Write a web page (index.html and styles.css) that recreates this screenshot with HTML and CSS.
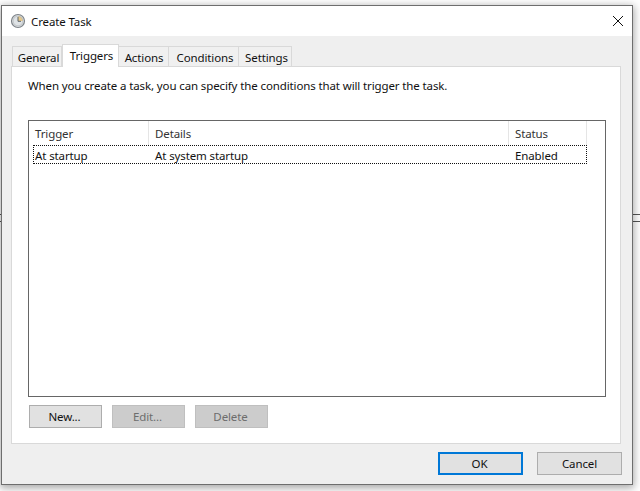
FILE: index.html
```html
<!DOCTYPE html>
<html lang="en">
<head>
<meta charset="utf-8">
<title>Create Task</title>
<link rel="stylesheet" href="styles.css">
</head>
<body>
<div class="desktop">
  <div class="bg-line bg-line-a"></div>
  <div class="bg-line bg-line-b"></div>
  <div class="window">
    <header class="titlebar">
      <svg class="clock" width="16" height="16" viewBox="0 0 16 16" aria-hidden="true">
        <circle cx="8" cy="8" r="6.5" fill="#dfe3e6" stroke="#7d8388" stroke-width="1.2"/>
        <path d="M8 3 A5 5 0 0 1 13 8 L8 8 Z" fill="#e6c98c"/>
        <circle cx="8" cy="8" r="4.9" fill="none" stroke="#a9aeb2" stroke-width=".6"/>
        <path d="M8 4v4.3h3" fill="none" stroke="#5f666b" stroke-width="1"/>
      </svg>
      <span class="title">Create Task</span>
      <svg class="close" width="10" height="10" viewBox="0 0 10 10" aria-hidden="true">
        <path d="M0 0L10 10M10 0L0 10" stroke="#111" stroke-width="1" fill="none"/>
      </svg>
    </header>
    <div class="content">
      <nav class="tabs">
        <span class="tab tab-general">General</span>
        <span class="tab tab-active">Triggers</span>
        <span class="tab tab-actions">Actions</span>
        <span class="tab tab-conditions">Conditions</span>
        <span class="tab tab-settings">Settings</span>
      </nav>
      <section class="panel">
        <p class="intro">When you create a task, you can specify the conditions that will trigger the task.</p>
        <div class="list">
          <div class="list-head">
            <span class="col col-trigger">Trigger</span>
            <span class="col col-details">Details</span>
            <span class="col col-status">Status</span>
          </div>
          <div class="list-row">
            <span class="cell cell-trigger">At startup</span>
            <span class="cell cell-details">At system startup</span>
            <span class="cell cell-status">Enabled</span>
          </div>
        </div>
        <div class="list-actions">
          <button class="btn btn-list">New...</button>
          <button class="btn btn-list btn-disabled">Edit...</button>
          <button class="btn btn-list btn-disabled">Delete</button>
        </div>
      </section>
      <footer class="dialog-actions">
        <button class="btn btn-dialog btn-default">OK</button>
        <button class="btn btn-dialog">Cancel</button>
      </footer>
    </div>
  </div>
</div>
</body>
</html>
```
FILE: styles.css
```css
* { box-sizing: border-box; }
html, body { margin: 0; height: 100%; }
body {
  background: #fff;
  font-family: "Noto Sans", "Open Sans", sans-serif;
  font-size: 11.5px;
  letter-spacing: -.12px;
  color: #111;
  overflow: hidden;
}
.desktop {
  position: relative;
  width: 640px;
  height: 491px;
  overflow: hidden;
}
.bg-line {
  position: absolute;
  left: 0;
  width: 640px;
  height: 1px;
  background: #555;
}
.bg-line-a { top: 214px; }
.bg-line-b { top: 221px; }
.window {
  position: absolute;
  left: 1px;
  top: 5px;
  width: 632px;
  height: 480px;
  border: 1px solid #6e6e6e;
  background: #efefef;
  display: flex;
  flex-direction: column;
  box-shadow: 0 2px 8px 1px rgba(0, 0, 0, .35);
}
.titlebar {
  height: 30px;
  flex: none;
  background: #fff;
  display: flex;
  align-items: center;
  padding: 0 9px 0 8px;
  gap: 5px;
}
.title { flex: 1; color: #111; }
.content {
  flex: 1;
  padding: 9px 10px 9px 9px;
  display: flex;
  flex-direction: column;
}
.tabs {
  display: flex;
  align-items: flex-end;
  height: 22px;
  padding-left: 1px;
  position: relative;
  z-index: 1;
  margin-bottom: -1px;
}
.tab {
  height: 20px;
  margin-bottom: 1px;
  padding: 2px 0 0 3px;
  background: #f0f0f0;
  border: 1px solid #d9d9d9;
  border-bottom: 0;
  border-left: 0;
  display: flex;
  align-items: center;
  justify-content: center;
  color: #111;
}
.tab-general { width: 50px; border-left: 1px solid #d9d9d9; }
.tab-active {
  width: 57px;
  height: 23px;
  margin-bottom: 0;
  padding: 0 0 2px 2px;
  background: #fff;
  border: 1px solid #d9d9d9;
  border-bottom: 0;
}
.tab-actions { width: 50px; padding-left: 1px; }
.tab-conditions { width: 70px; }
.tab-settings { width: 53px; }
.panel {
  flex: none;
  height: 378px;
  width: 610px;
  background: #fff;
  border: 1px solid #d9d9d9;
  padding: 10px 15px 14px 16px;
  display: flex;
  flex-direction: column;
}
.intro {
  margin: 0;
  height: 17px;
  line-height: 17px;
  white-space: nowrap;
  color: #111;
}
.list {
  margin-top: 26px;
  width: 578px;
  height: 277px;
  border: 1px solid #666;
  background: #fff;
}
.list-head, .list-row {
  display: grid;
  grid-template-columns: 120px 360px 78px;
  width: 558px;
}
.list-head { height: 24px; }
.col {
  display: flex;
  align-items: center;
  padding-left: 6px;
  border-right: 1px solid #e5e5e5;
  color: #333;
}
.list-row {
  height: 19px;
  margin-left: 4px;
  width: 554px;
  grid-template-columns: 116px 360px 78px;
  border: 1px dotted #111;
  align-items: center;
  padding-top: 2px;
}
.cell { padding-left: 1px; color: #111; }
.cell-details, .cell-status { padding-left: 5px; }
.list-actions {
  display: flex;
  gap: 10px;
  margin-top: 8px;
  padding-left: 1px;
}
.btn {
  width: 73px;
  height: 23px;
  padding: 0;
  font: inherit;
  letter-spacing: inherit;
  color: #111;
  background: #e1e1e1;
  border: 1px solid #adadad;
}
.btn-list { padding-right: 2px; }
.btn-disabled {
  background: #ccc;
  border-color: #bfbfbf;
  color: #6d6d6d;
}
.dialog-actions {
  display: flex;
  justify-content: flex-end;
  gap: 14px;
  margin-top: 8px;
}
.btn-dialog { width: 85px; }
.btn-default { border: 2px solid #0078d7; padding-right: 2px; }
```
